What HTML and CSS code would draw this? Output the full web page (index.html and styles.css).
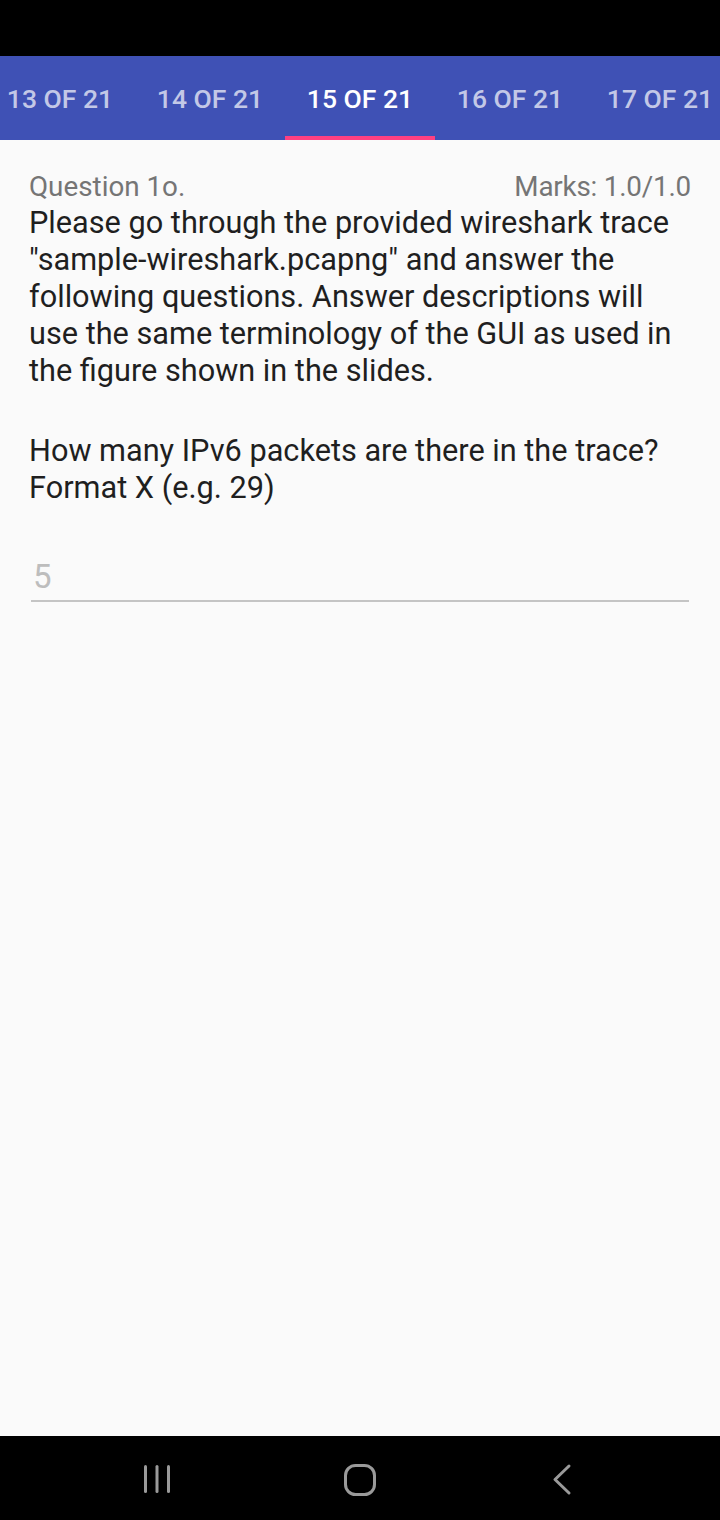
FILE: index.html
```html
<!DOCTYPE html>
<html>
<head>
<meta charset="utf-8">
<link rel="stylesheet" href="styles.css">
</head>
<body>
<div class="screen">
  <div class="status"></div>
  <div class="tabs">
    <div class="tab">13 OF 21</div>
    <div class="tab">14 OF 21</div>
    <div class="tab active">15 OF 21</div>
    <div class="tab">16 OF 21</div>
    <div class="tab">17 OF 21</div>
  </div>
  <main class="content">
    <div class="head">
      <span class="qnum">Question 1o.</span>
      <span class="marks">Marks: 1.0/1.0</span>
    </div>
    <p class="qtext">Please go through the provided wireshark trace "sample-wireshark.pcapng" and answer the following questions. Answer descriptions will use the same terminology of the GUI as used in the figure shown in the slides.</p>
    <p class="qtext second">How many IPv6 packets are there in the trace? Format X (e.g. 29)</p>
    <div class="answer">5</div>
  </main>
  <div class="navbar">
    <svg class="nav-icon" width="40" height="40" viewBox="0 0 40 40">
      <rect x="5" y="5" width="3" height="28" rx="1.5" fill="#9a9a9a"/>
      <rect x="16.5" y="5" width="3" height="28" rx="1.5" fill="#9a9a9a"/>
      <rect x="28" y="5" width="3" height="28" rx="1.5" fill="#9a9a9a"/>
    </svg>
    <svg class="nav-icon" width="40" height="40" viewBox="0 0 40 40">
      <rect x="5.5" y="5.5" width="29" height="29" rx="10" fill="none" stroke="#9a9a9a" stroke-width="3"/>
    </svg>
    <svg class="nav-icon" width="40" height="40" viewBox="0 0 40 40">
      <path d="M28 6 L14 19.5 L28 33" fill="none" stroke="#9a9a9a" stroke-width="3" stroke-linecap="round" stroke-linejoin="round"/>
    </svg>
  </div>
</div>
</body>
</html>
```
FILE: styles.css
```css
* { box-sizing: border-box; }
html, body { margin: 0; padding: 0; }
body { font-family: Roboto, "Noto Sans", sans-serif; background: #fafafa; }
.screen { width: 720px; height: 1520px; display: flex; flex-direction: column; overflow: hidden; }
.status { height: 56px; background: #000; flex: none; }
.tabs { height: 84px; background: #3f51b5; display: flex; flex: none; margin-left: -15px; }
.tab { width: 150px; flex: none; display: flex; align-items: center; justify-content: center; font-size: 26.5px; font-weight: 500; color: rgba(255,255,255,0.7); border-bottom: 4px solid transparent; padding-top: 4px; white-space: nowrap; }
.tab.active { color: #fff; border-bottom-color: #ff4081; }
.content { flex: 1; padding: 30px 29px 0 29px; }
.head { display: flex; justify-content: space-between; font-size: 27.8px; color: #757575; line-height: 34px; }
.marks { letter-spacing: -0.2px; }
.qtext { margin: 0; font-size: 30.7px; line-height: 37px; color: #1f1f1f; }
.qtext.second { margin-top: 43px; }
.answer { margin: 51px 2px 0 2px; font-size: 33px; color: #bdbdbd; padding: 0 2px 3px; border-bottom: 2px solid #c4c4c4; line-height: 40px; }
.navbar { height: 84px; background: #000; flex: none; display: flex; justify-content: center; gap: 161px; align-items: center; padding-top: 4px; }
.nav-icon { display: block; }
```
